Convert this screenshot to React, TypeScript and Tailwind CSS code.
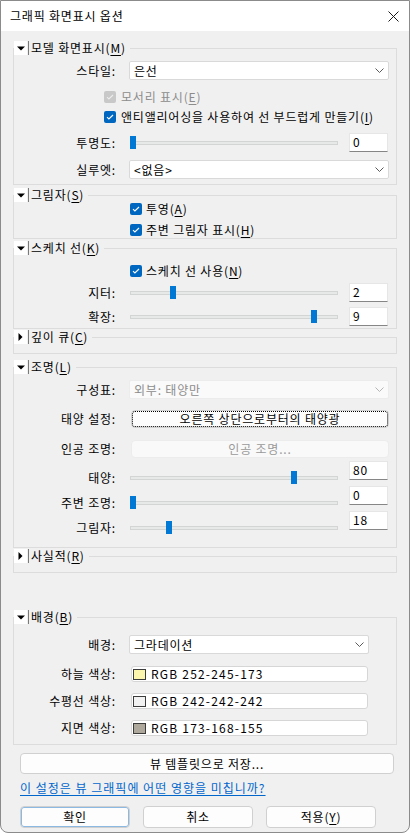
import type { ReactNode } from "react";

// mnemonic: "&X" underlines X
function Mn({ text }: { text: string }) {
  const i = text.indexOf("&");
  if (i < 0) return <>{text}</>;
  return (
    <>
      {text.slice(0, i)}
      <span className="underline underline-offset-[2px]">{text[i + 1]}</span>
      {text.slice(i + 2)}
    </>
  );
}

function Arrow({ open }: { open: boolean }) {
  return (
    <div className="w-[13px] h-[14px] bg-white flex items-center justify-center">
      {open ? (
        <svg width="8" height="5" viewBox="0 0 8 5">
          <path d="M0 0.5h8L4 4.5z" fill="#000" />
        </svg>
      ) : (
        <svg width="5" height="8" viewBox="0 0 5 8">
          <path d="M0.5 0v8l4-4z" fill="#000" />
        </svg>
      )}
    </div>
  );
}

function Section({
  title,
  open = true,
  className = "",
  children,
}: {
  title: string;
  open?: boolean;
  className?: string;
  children?: ReactNode;
}) {
  return (
    <div className={`border border-[#dcdcdc] flex flex-col ${className}`}>
      <div className="-mt-[8px] h-[14px] flex">
        <div className="flex items-center bg-[#f0f0f0] pr-[4px]">
          <Arrow open={open} />
          <div className="ml-[1px] w-[1px] h-[14px] bg-[#7a7a7a]" />
          <span className="ml-[2px] text-[12px] leading-[14px] whitespace-nowrap">
            <Mn text={title} />
          </span>
        </div>
      </div>
      {children}
    </div>
  );
}

function Label({ text }: { text: string }) {
  return (
    <div className="w-[102px] shrink-0 text-right text-[12px] leading-[16px] whitespace-nowrap">{text}</div>
  );
}

function Chevron({ color = "#5a5a5a" }: { color?: string }) {
  return (
    <svg width="9" height="5" viewBox="0 0 9 5">
      <path d="M0.5 0.5l4 4 4-4" stroke={color} strokeWidth="1" fill="none" />
    </svg>
  );
}

function Select({ value, className = "w-[260px]", disabled = false }: { value: string; className?: string; disabled?: boolean }) {
  return (
    <div
      className={`h-full flex items-center justify-between pl-[4px] pr-[4px] rounded-[2px] border text-[12px] leading-[16px] ${className} ${
        disabled ? "bg-[#fafafa] border-[#ececec] text-[#8c8c8c]" : "bg-white border-[#d9d9d9] text-black"
      }`}
    >
      <span>{value}</span>
      <Chevron color={disabled ? "#b5b5b5" : "#5a5a5a"} />
    </div>
  );
}

function Check({ disabled = false }: { disabled?: boolean }) {
  return (
    <div
      className={`w-[12px] h-[12px] shrink-0 rounded-[2px] flex items-center justify-center ${
        disabled ? "bg-[#c8c8c8]" : "bg-[#0067c0]"
      }`}
    >
      <svg width="8" height="6" viewBox="0 0 8 6">
        <path d="M1 3.2l1.9 1.8L7 1" stroke={disabled ? "#ececec" : "#fff"} strokeWidth="1.1" fill="none" />
      </svg>
    </div>
  );
}

function Slider({ frac }: { frac: number }) {
  return (
    <div className="relative w-[208px] h-[13px] flex items-center">
      <div className="w-full h-[4px] bg-[#e7e9e9] border border-[#d3d5d5]" />
      <div className="absolute top-0 w-[6px] h-[13px] bg-[#0078d4]" style={{ left: Math.round(frac * 201) }} />
    </div>
  );
}

function Num({ v }: { v: string }) {
  return (
    <div className="w-[39px] h-[19px] shrink-0 bg-white border border-[#e6e6e6] border-b-[#868686] pl-[3px] text-[12px] leading-[15px]">
      {v}
    </div>
  );
}

function SliderRow({ label, frac, v, className = "" }: { label: string; frac: number; v: string; className?: string }) {
  return (
    <div className={`h-[19px] flex items-center ${className}`}>
      <Label text={label} />
      <div className="ml-[14px]">
        <Slider frac={frac} />
      </div>
      <div className="ml-[11px]">
        <Num v={v} />
      </div>
    </div>
  );
}

function LightRow({ label, frac, v, className = "" }: { label: string; frac: number; v: string; className?: string }) {
  return (
    <div className={`h-[25px] flex items-start ${className}`}>
      <div className="mt-[10px] h-[13px] flex items-center">
        <Label text={label} />
        <div className="ml-[14px]">
          <Slider frac={frac} />
        </div>
      </div>
      <div className="ml-[11px]">
        <Num v={v} />
      </div>
    </div>
  );
}

function ColorRow({ label, rgb, className = "" }: { label: string; rgb: [number, number, number]; className?: string }) {
  return (
    <div className={`h-[16px] flex items-center ${className}`}>
      <Label text={label} />
      <div className="ml-[15px] w-[237px] h-full bg-white border border-[#d6d6d6] rounded-[3px] flex items-center pl-[1px]">
        <div
          className="w-[13px] h-[11px] border border-[#3c3c3c]"
          style={{ backgroundColor: `rgb(${rgb[0]},${rgb[1]},${rgb[2]})` }}
        />
        <span className="ml-[5px] text-[12px] leading-[14px] tracking-[1.2px]">RGB {rgb.join("-")}</span>
      </div>
    </div>
  );
}

function Button({ children, className = "" }: { children: ReactNode; className?: string }) {
  return (
    <div
      className={`flex items-center justify-center bg-[#fdfdfd] border border-[#d0d0d0] rounded-[4px] text-[12px] leading-[16px] ${className}`}
    >
      {children}
    </div>
  );
}

export default function App() {
  return (
    <div className="w-[410px] h-[833px] font-['Noto_Sans_CJK_KR','Malgun_Gothic',sans-serif] tracking-[0.8px] text-black bg-[#f0f0f0] border border-[#8b8b8b] rounded-b-[8px] overflow-hidden flex flex-col">
      {/* title bar */}
      <div className="h-[30px] shrink-0 bg-white flex items-center justify-between pl-[9px] pr-[10px]">
        <span className="text-[12px] leading-[16px]">그래픽 화면표시 옵션</span>
        <svg width="11" height="11" viewBox="0 0 11 11">
          <path d="M0.5 0.5l10 10M10.5 0.5l-10 10" stroke="#1a1a1a" strokeWidth="1" />
        </svg>
      </div>

      <div className="flex flex-col px-[12px]">
        {/* 모델 화면표시 */}
        <Section className="mt-[17px]" title="모델 화면표시(&M)">
          <div className="mt-[6px] h-[19px] flex items-center">
            <Label text="스타일:" />
            <div className="ml-[13px] h-full">
              <Select value="은선" />
            </div>
          </div>
          <div className="mt-[7px] h-[20px] flex items-center pl-[90px]">
            <Check disabled />
            <span className="ml-[5px] text-[12px] leading-[16px] text-[#8c8c8c]">
              <Mn text="모서리 표시(&E)" />
            </span>
          </div>
          <div className="h-[20px] flex items-center pl-[90px]">
            <Check />
            <span className="ml-[5px] text-[12px] leading-[16px] whitespace-nowrap">
              <Mn text="앤티앨리어싱을 사용하여 선 부드럽게 만들기(&I)" />
            </span>
          </div>
          <SliderRow className="mt-[6px]" label="투명도:" frac={0} v="0" />
          <div className="mt-[8px] h-[19px] flex items-center">
            <Label text="실루엣:" />
            <div className="ml-[13px] h-full">
              <Select value="<없음>" />
            </div>
          </div>
          <div className="h-[5px]" />
        </Section>

        {/* 그림자 */}
        <Section className="mt-[10px]" title="그림자(&S)">
          <div className="mt-[1px] h-[12px] flex items-center pl-[116px]">
            <Check />
            <span className="ml-[4px] text-[12px] leading-[14px]">
              <Mn text="투영(&A)" />
            </span>
          </div>
          <div className="mt-[9px] h-[12px] flex items-center pl-[116px]">
            <Check />
            <span className="ml-[4px] text-[12px] leading-[14px]">
              <Mn text="주변 그림자 표시(&H)" />
            </span>
          </div>
          <div className="h-[2px]" />
        </Section>

        {/* 스케치 선 */}
        <Section className="mt-[9px]" title="스케치 선(&K)">
          <div className="mt-[10px] h-[12px] flex items-center pl-[116px]">
            <Check />
            <span className="ml-[4px] text-[12px] leading-[14px]">
              <Mn text="스케치 선 사용(&N)" />
            </span>
          </div>
          <SliderRow className="mt-[6px]" label="지터:" frac={0.2} v="2" />
          <SliderRow className="mt-[5px]" label="확장:" frac={0.9} v="9" />
          <div className="h-[2px]" />
        </Section>

        {/* 깊이 큐 */}
        <Section className="mt-[8px]" title="깊이 큐(&C)" open={false}>
          <div className="h-[9px]" />
        </Section>

        {/* 조명 */}
        <Section className="mt-[13px]" title="조명(&L)">
          <div className="mt-[6px] h-[19px] flex items-center">
            <Label text="구성표:" />
            <div className="ml-[13px] h-full">
              <Select value="외부: 태양만" disabled />
            </div>
          </div>
          <div className="mt-[11px] h-[18px] flex items-center">
            <Label text="태양 설정:" />
            <div className="ml-[15px] h-full">
              <Button className="w-[258px] h-full outline outline-1 outline-dotted outline-black -outline-offset-2">
                오른쪽 상단으로부터의 태양광
              </Button>
            </div>
          </div>
          <div className="mt-[12px] h-[18px] flex items-center">
            <Label text="인공 조명:" />
            <div className="ml-[15px] h-full">
              <div className="w-[258px] h-full flex items-center justify-center bg-[#f9f9f9] border border-[#ececec] rounded-[4px] text-[12px] leading-[16px] text-[#9a9a9a]">
                인공 조명...
              </div>
            </div>
          </div>
          <LightRow className="mt-[3px]" label="태양:" frac={0.8} v="80" />
          <LightRow label="주변 조명:" frac={0} v="0" />
          <LightRow label="그림자:" frac={0.18} v="18" />
          <div className="h-[11px]" />
        </Section>

        {/* 사실적 */}
        <Section className="mt-[8px]" title="사실적(&R)" open={false}>
          <div className="h-[9px]" />
        </Section>

        {/* 배경 */}
        <Section className="mt-[44px]" title="배경(&B)">
          <div className="mt-[11px] h-[19px] flex items-center">
            <Label text="배경:" />
            <div className="ml-[13px] h-full">
              <Select value="그라데이션" className="w-[240px]" />
            </div>
          </div>
          <ColorRow className="mt-[12px]" label="하늘 색상:" rgb={[252, 245, 173]} />
          <ColorRow className="mt-[11px]" label="수평선 색상:" rgb={[242, 242, 242]} />
          <ColorRow className="mt-[11px]" label="지면 색상:" rgb={[173, 168, 155]} />
          <div className="h-[8px]" />
        </Section>

        <Button className="mt-[8px] ml-[7px] w-[374px] h-[21px]">뷰 템플릿으로 저장...</Button>

        <div className="mt-[6px] ml-[7px] h-[16px] text-[12px] leading-[16px] tracking-[1px] text-[#0066cc] underline underline-offset-[2px] whitespace-nowrap">
          이 설정은 뷰 그래픽에 어떤 영향을 미칩니까?
        </div>

        <div className="mt-[10px] ml-[7px] flex gap-[13px]">
          <Button className="w-[110px] h-[22px] border-[#0067c0] shadow-[inset_0_0_0_1px_rgba(0,103,192,0.45)]">확인</Button>
          <Button className="w-[110px] h-[22px]">취소</Button>
          <Button className="w-[110px] h-[22px]">
            <Mn text="적용(&Y)" />
          </Button>
        </div>
      </div>
    </div>
  );
}
